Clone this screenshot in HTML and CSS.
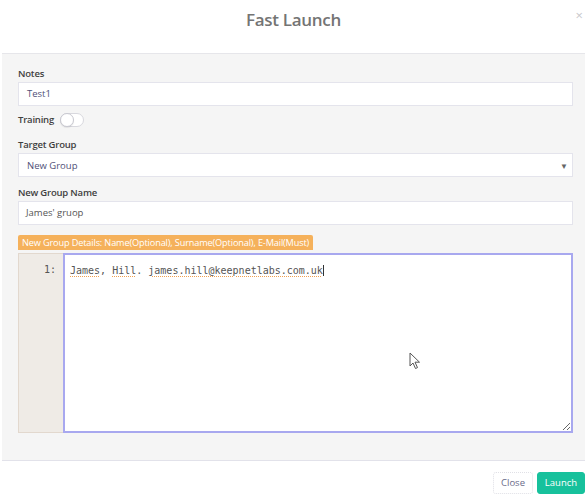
FILE: index.html
```html
<!DOCTYPE html>
<html>
<head>
<meta charset="utf-8">
<link rel="stylesheet" href="styles.css">
</head>
<body>
<div class="modal">
  <div class="modal-header">
    <h2 class="title">Fast Launch</h2>
    <span class="close-x">×</span>
  </div>
  <div class="modal-body">
    <div class="field">
      <label class="lbl">Notes</label>
      <div class="input">Test1</div>
    </div>
    <div class="toggle-row">
      <span class="lbl">Training</span>
      <span class="switch"><span class="knob"></span></span>
    </div>
    <div class="field gap-l">
      <label class="lbl">Target Group</label>
      <div class="input select"><span>New Group</span><span class="caret">▼</span></div>
    </div>
    <div class="field gap-m">
      <label class="lbl">New Group Name</label>
      <div class="input dark">James' gruop</div>
    </div>
    <div class="badge">New Group Details: Name(Optional), Surname(Optional), E-Mail(Must)</div>
    <div class="editor">
      <div class="gutter">1:</div>
      <div class="code"><span class="sp">James</span>, <span class="sp">Hill</span>. <span class="sp">james.hill@keepnetlabs.com.uk</span><span class="cursor"></span></div>
    </div>
  </div>
  <div class="modal-footer">
    <button class="btn btn-close">Close</button>
    <button class="btn btn-launch">Launch</button>
  </div>
  <svg class="pointer" width="12" height="18" viewBox="0 0 12 18"><path d="M1 1 L1 14 L4 11 L6.5 16.5 L8.5 15.6 L6 10.2 L10.5 10.2 Z" fill="#fff" stroke="#555" stroke-width="1" stroke-linejoin="round"/></svg>
</div>
</body>
</html>
```
FILE: styles.css
```css
* { box-sizing: border-box; }
html, body { margin: 0; padding: 0; background: #fff; }
body { width: 587px; height: 500px; overflow: hidden; font-family: "Open Sans", "Noto Sans", sans-serif; }
.modal { position: relative; width: 587px; height: 500px; display: flex; flex-direction: column; background: #fff; }
.modal-header { position: relative; height: 54px; margin: 0 2px; border-bottom: 1px solid #e6e6ea; padding-top: 8px; }
.title { margin: 0; text-align: center; font-size: 17px; line-height: 24px; font-weight: 600; color: #747474; letter-spacing: -0.3px; }
.close-x { position: absolute; right: 2px; top: 7px; font-size: 13px; color: #c8c8cc; line-height: 16px; }
.modal-body { flex: 1; background: #f5f5f5; margin: 0 2px; padding: 13px 12px 0 16px; border-bottom: 1px solid #e2e2ea; }
.field { display: flex; flex-direction: column; }
.lbl { font-size: 9.5px; font-weight: 600; color: #3f3f3f; line-height: 14px; margin-bottom: 1px; letter-spacing: -0.2px; }
.input { height: 24px; background: #fff; border: 1px solid #e4e4ec; font-size: 9.5px; line-height: 22px; padding-left: 8px; color: #505078; }
.input.dark { color: #555; padding-left: 7px; }
.select { display: flex; justify-content: space-between; align-items: center; padding-right: 4px; line-height: normal; }
.caret { font-size: 8px; color: #666; }
.toggle-row { display: flex; align-items: center; gap: 6px; margin-top: 7px; height: 14px; }
.toggle-row .lbl { margin-bottom: 0; }
.switch { position: relative; display: inline-block; width: 24px; height: 14px; border-radius: 7px; background: #fff; border: 1px solid #d8d8de; }
.knob { position: absolute; left: -1px; top: -1px; width: 14px; height: 14px; border-radius: 50%; background: #fff; border: 1px solid #c8c8d0; box-shadow: 0 1px 1px rgba(0,0,0,0.08); }
.gap-l { margin-top: 11px; }
.gap-m { margin-top: 9px; }
.badge { display: inline-block; margin-top: 10px; background: #f5b15b; color: #fff; font-size: 9.2px; line-height: 15px; height: 15px; padding: 0 4px; letter-spacing: -0.15px; border-radius: 2px 2px 0 0; }
.editor { display: flex; height: 180px; margin-top: 2px; }
.gutter { width: 45px; flex: none; background: #efebe6; border: 1px solid #e2d8ce; border-right: none; font-family: "DejaVu Sans Mono", monospace; font-size: 10px; color: #555; text-align: right; padding: 10px 7px 0 0; }
.code { flex: 1; background: #fff; border: 2px solid #a8a8ef; font-family: "DejaVu Sans Mono", monospace; font-size: 10px; color: #555; padding: 9px 5px; line-height: 14px; resize: vertical; overflow: auto; }
.sp { text-decoration: underline dotted #f0a050; text-underline-offset: 2px; text-decoration-thickness: 1px; }
.cursor { display: inline-block; width: 1px; height: 11px; background: #333; vertical-align: -2px; }
.modal-footer { height: 39px; display: flex; justify-content: flex-end; align-items: flex-start; gap: 4px; padding: 11px 2px 0 0; }
.btn { height: 22px; font-family: "Open Sans", "Noto Sans", sans-serif; font-size: 9.5px; border-radius: 3px; padding: 0 8px; line-height: 20px; }
.btn-close { background: #fff; border: 1px dotted #e0e0e6; color: #6b6b8a; width: 40px; padding: 0; }
.btn-launch { background: #17c19c; border: 1px solid #17c19c; color: #fff; width: 48px; padding: 0; }
.pointer { position: absolute; left: 409px; top: 352px; }
```
